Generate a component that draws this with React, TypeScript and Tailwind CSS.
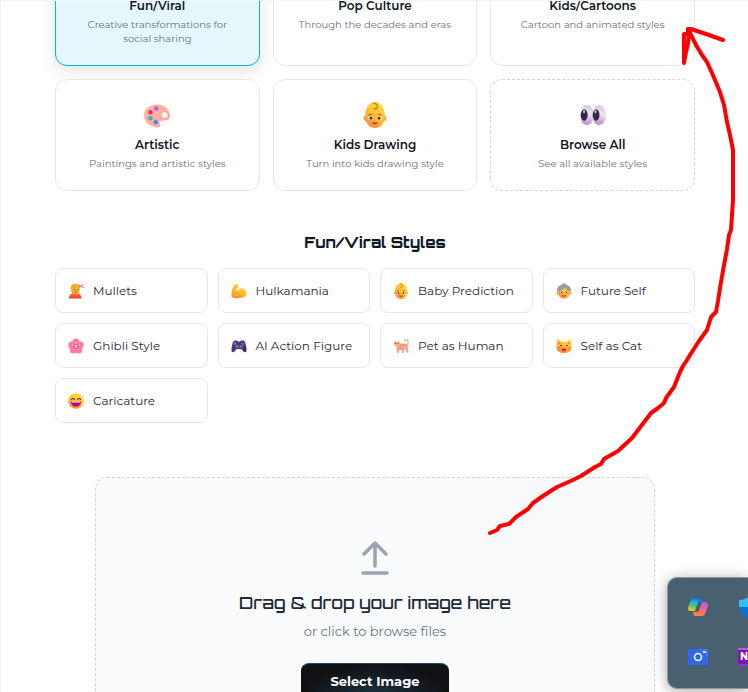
import type { ReactNode } from "react";

function Icon({ size, children }: { size: number; children: ReactNode }) {
  return (
    <svg width={size} height={size} viewBox="0 0 32 32" aria-hidden="true" className="shrink-0">
      {children}
    </svg>
  );
}

function Gradients() {
  return (
    <svg width="0" height="0" className="absolute" aria-hidden="true">
      <defs>
        <linearGradient id="gold" x1="0.8" y1="0" x2="0.3" y2="1">
          <stop offset="0" stopColor="#ffe04a" />
          <stop offset="0.55" stopColor="#fdbd2c" />
          <stop offset="1" stopColor="#f68b3c" />
        </linearGradient>
        <linearGradient id="peach" x1="0" y1="0" x2="1" y2="1">
          <stop offset="0" stopColor="#ffb79d" />
          <stop offset="1" stopColor="#ffa5a4" />
        </linearGradient>
        <linearGradient id="eye" x1="0.6" y1="0" x2="0.4" y2="1">
          <stop offset="0" stopColor="#d2c9d6" />
          <stop offset="0.4" stopColor="#ece8ee" />
          <stop offset="1" stopColor="#b58ace" />
        </linearGradient>
        <linearGradient id="pad" x1="0" y1="0" x2="1" y2="1">
          <stop offset="0" stopColor="#5b4488" />
          <stop offset="1" stopColor="#3b2270" />
        </linearGradient>
        <linearGradient id="shirt" x1="0" y1="0" x2="0" y2="1">
          <stop offset="0" stopColor="#ff7a35" />
          <stop offset="1" stopColor="#f43b28" />
        </linearGradient>
        <linearGradient id="copilotLeft" x1="0.6" y1="0" x2="0.3" y2="1">
          <stop offset="0" stopColor="#1565e0" />
          <stop offset="0.35" stopColor="#22b0e8" />
          <stop offset="0.65" stopColor="#58c66a" />
          <stop offset="1" stopColor="#f5c51b" />
        </linearGradient>
        <linearGradient id="copilotRight" x1="0.8" y1="0" x2="0.3" y2="1">
          <stop offset="0" stopColor="#b05cf0" />
          <stop offset="0.5" stopColor="#f4648e" />
          <stop offset="1" stopColor="#ff8a3c" />
        </linearGradient>
      </defs>
    </svg>
  );
}

function Palette({ size }: { size: number }) {
  return (
    <Icon size={size}>
      <path fill="url(#peach)" d="M16 3C7 3 0 8 0 17c0 8 8 14 17 14 5 0 3-3 2-6 0-2 2-2 5-2 5 0 8-2 8-6 0-8-7-14-16-14Z" />
      <circle cx="25.5" cy="16" r="3.4" fill="#fff" />
      <circle cx="15" cy="8" r="2.8" fill="#b85cf2" />
      <circle cx="8" cy="12.5" r="2.8" fill="#e82e83" />
      <circle cx="8" cy="20" r="2.8" fill="#3cb6ac" />
      <circle cx="14.5" cy="25" r="2.8" fill="#398cf0" />
    </Icon>
  );
}

function Baby({ size }: { size: number }) {
  return (
    <Icon size={size}>
      <ellipse cx="4.5" cy="20" rx="2.5" ry="3.4" fill="#f5a128" />
      <ellipse cx="27.5" cy="20" rx="2.5" ry="3.4" fill="#fcb42e" />
      <path fill="url(#gold)" d="M16 0C8 0 4 8 4 17c0 9 4 15 12 15s12-6 12-15C28 8 24 0 16 0Z" />
      <path d="M14 2c3-1 5 1 5 4 0 2-2 3-4 2" fill="none" stroke="#c9861a" strokeWidth="1.8" strokeLinecap="round" />
      <path d="M8 16l4-1m8 0 4 1" stroke="#b35c1c" strokeWidth="1.5" />
      <ellipse cx="10.5" cy="20" rx="2.8" ry="2.1" fill="#fff" />
      <ellipse cx="21.5" cy="20" rx="2.8" ry="2.1" fill="#fff" />
      <circle cx="11" cy="20" r="1.8" fill="#45302e" />
      <circle cx="21" cy="20" r="1.8" fill="#45302e" />
      <path d="M12 24.5c3 1 5 1 8 0-1 2-2 3-4 3s-3-1-4-3Z" fill="#b92c48" />
    </Icon>
  );
}

function Eyes({ size }: { size: number }) {
  return (
    <Icon size={size}>
      <ellipse cx="8.5" cy="16" rx="8.5" ry="12.5" fill="url(#eye)" />
      <ellipse cx="23.5" cy="16" rx="8.5" ry="12.5" fill="url(#eye)" />
      <ellipse cx="5.2" cy="16" rx="4.2" ry="7" fill="#37264a" />
      <ellipse cx="19.8" cy="16" rx="4.2" ry="7" fill="#37264a" />
      <ellipse cx="5" cy="12" rx="1.2" ry="1.8" fill="#d8d0df" />
      <ellipse cx="19" cy="12" rx="1.2" ry="1.8" fill="#d8d0df" />
    </Icon>
  );
}

function Haircut({ size }: { size: number }) {
  return (
    <Icon size={size}>
      <path d="M2 31c0-8 4-11 12-11s13 3 13 11Z" fill="url(#shirt)" />
      <path d="M6 13C5 5 9 2 15 2s10 4 9 11c0 6-3 10-8 10S6 20 6 13Z" fill="url(#gold)" />
      <path d="M6 13C4 5 9 1 15 2c5 0 8 2 8 6-6 0-9 1-11 4-1 4-4 4-6 1Z" fill="#f2ad20" />
      <circle cx="14" cy="13" r="1.3" fill="#4e5260" />
      <circle cx="20" cy="13" r="1.3" fill="#4e5260" />
      <path d="M14 18h5" stroke="#c34a35" strokeWidth="1.5" />
      <path d="M22 9l8-6m-8 2 9 4" stroke="#e0627d" strokeWidth="2" strokeLinecap="round" />
    </Icon>
  );
}

function Muscle({ size }: { size: number }) {
  return (
    <Icon size={size}>
      <path fill="url(#gold)" d="M6 4c3-3 8-2 9 1 1 3-1 5-4 5l1 7c3-6 9-8 14-5 6 4 6 11 2 15-5 4-21 5-27 1C0 20 2 10 6 4Z" />
      <path d="M12 18c2 4 2 5 6 6m-7-14-4 1" fill="none" stroke="#eaa02e" strokeWidth="1.5" strokeLinecap="round" />
    </Icon>
  );
}

function Elder({ size }: { size: number }) {
  return (
    <Icon size={size}>
      <circle cx="16" cy="5" r="4.5" fill="#9b9aa3" />
      <circle cx="4" cy="20" r="3" fill="#f5a128" />
      <circle cx="28" cy="20" r="3" fill="#f5a128" />
      <path d="M4 16C4 7 9 4 16 4s12 4 12 12c0 10-4 15-12 15S4 26 4 16Z" fill="url(#gold)" />
      <path d="M2 17C1 7 8 3 16 3s15 5 14 14c-6-1-10-4-12-8-3 4-8 7-16 8Z" fill="#9b9ca6" />
      <circle cx="10.5" cy="19" r="3" fill="#f3e4be" stroke="#ae7e43" />
      <circle cx="21.5" cy="19" r="3" fill="#f3e4be" stroke="#ae7e43" />
      <circle cx="11" cy="19" r="1.5" fill="#4a4045" />
      <circle cx="21" cy="19" r="1.5" fill="#4a4045" />
      <path d="M12 25q4 3 8 0" fill="none" stroke="#bd3b3b" strokeWidth="2" />
    </Icon>
  );
}

function Blossom({ size }: { size: number }) {
  return (
    <Icon size={size}>
      <g fill="#fb7ba4">
        <circle cx="16" cy="8" r="7" />
        <circle cx="24.5" cy="14" r="7" />
        <circle cx="21.5" cy="24" r="7" />
        <circle cx="10.5" cy="24" r="7" />
        <circle cx="7.5" cy="14" r="7" />
      </g>
      <circle cx="16" cy="17" r="6" fill="#ec477f" />
      <path d="M16 17V9m0 8 7-3m-7 3 5 7m-5-7-5 7m5-7-7-3" stroke="#ffd7e1" strokeWidth="1.6" strokeLinecap="round" />
    </Icon>
  );
}

function Gamepad({ size }: { size: number }) {
  return (
    <Icon size={size}>
      <path d="M7 5h5l2 2h4l2-2h5c3 0 5 8 6 17 1 8-4 8-7 4l-3-4H11l-3 4C5 30 0 30 1 22 2 13 4 5 7 5Z" fill="url(#pad)" />
      <circle cx="12" cy="17" r="3.2" fill="#7c69aa" />
      <circle cx="20" cy="17" r="3.2" fill="#7c69aa" />
      <circle cx="22" cy="11" r="1.4" fill="#45a3f5" />
      <circle cx="26" cy="11" r="1.4" fill="#ee4e65" />
      <circle cx="24" cy="14" r="1.4" fill="#52cd72" />
      <path d="M8 9v5m-2.5-2.5h5" stroke="#9b8bc4" strokeWidth="1.6" />
    </Icon>
  );
}

function Cat({ size }: { size: number }) {
  return (
    <Icon size={size}>
      <path d="M24 14c6 0 6-2 6-6 0-5-5-6-7-3" fill="none" stroke="#efb395" strokeWidth="2.8" strokeLinecap="round" />
      <path d="M2 5l4 3h3l4-3v6l12 0c4 0 6 4 5 8l1 10h-5l-1-6-3 1v6h-4l-1-6h-4l-1 6H8l-1-9-1-5c-3-1-5-3-4-6Z" fill="#f2ad8c" />
      <path d="m15 12 1 4m4-4v4m5-3-1 4M8 21h4" stroke="#d98466" strokeWidth="1.5" />
      <circle cx="5" cy="11" r="1" fill="#513b3b" />
      <circle cx="10" cy="11" r="1" fill="#513b3b" />
      <path d="M10 18h12l-2 6h-8Z" fill="#f694a0" />
    </Icon>
  );
}

function CatFace({ size }: { size: number }) {
  return (
    <Icon size={size}>
      <path d="M3 2c3 1 6 3 8 6h10c2-3 5-5 8-6 2 4 2 11 2 17 0 8-7 11-15 11S1 27 1 19C1 13 1 6 3 2Z" fill="url(#gold)" />
      <path d="m5 7 4 4-4 2Zm22 0-4 4 4 2Z" fill="#f57b5c" />
      <path d="M1 19h8m-7 5 7-1m22-4h-8m7 5-7-1" stroke="#ee6a4e" strokeWidth="1.5" />
      <path d="M8 16q2-3 4 0m8 0q2-3 4 0" fill="none" stroke="#57392e" strokeWidth="2" />
      <path d="M11 21h10q-1 6-5 6t-5-6Z" fill="#bc2b5b" />
      <path d="M14 19h4l-2 3Z" fill="#ff7a79" />
    </Icon>
  );
}

function Grin({ size }: { size: number }) {
  return (
    <Icon size={size}>
      <circle cx="16" cy="16" r="15.5" fill="url(#gold)" />
      <path d="M7 13q3-5 6 0m6 0q3-5 6 0" fill="none" stroke="#51332f" strokeWidth="2.2" strokeLinecap="round" />
      <path d="M6 17h20c0 6-4 10-10 10S6 23 6 17Z" fill="#b3087d" />
      <path d="M7 17h18l-1 2H8Z" fill="#fff" />
    </Icon>
  );
}

type Glyph = (props: { size: number }) => ReactNode;

const categories: { title: string; text: string; icon: Glyph; tone: string }[] = [
  {
    title: "Fun/Viral",
    text: "Creative transformations for social sharing",
    icon: Grin,
    tone: "border-[#06b6d4] bg-[#e6f7fb] shadow-[0_5px_16px_rgba(0,0,0,0.12)]",
  },
  { title: "Pop Culture", text: "Through the decades and eras", icon: Haircut, tone: "border-gray-200 bg-white" },
  { title: "Kids/Cartoons", text: "Cartoon and animated styles", icon: CatFace, tone: "border-gray-200 bg-white" },
  { title: "Artistic", text: "Paintings and artistic styles", icon: Palette, tone: "border-gray-200 bg-white" },
  { title: "Kids Drawing", text: "Turn into kids drawing style", icon: Baby, tone: "border-gray-200 bg-white" },
  { title: "Browse All", text: "See all available styles", icon: Eyes, tone: "border-dashed border-gray-300 bg-white" },
];

const styles: { label: string; icon: Glyph }[] = [
  { label: "Mullets", icon: Haircut },
  { label: "Hulkamania", icon: Muscle },
  { label: "Baby Prediction", icon: Baby },
  { label: "Future Self", icon: Elder },
  { label: "Ghibli Style", icon: Blossom },
  { label: "AI Action Figure", icon: Gamepad },
  { label: "Pet as Human", icon: Cat },
  { label: "Self as Cat", icon: CatFace },
  { label: "Caricature", icon: Grin },
];

function TrayPanel() {
  return (
    <aside className="absolute right-0 bottom-[3px] grid h-28 w-[81px] grid-rows-2 overflow-hidden rounded-l-[10px] border border-r-0 border-[#8d979d] bg-[#48606f] pt-1 pb-1.5 shadow-[0_2px_14px_rgba(0,0,0,0.35)]">
      <div className="flex items-center gap-[30px] pl-5">
        <svg width="20" height="18" viewBox="0 0 20 18" className="shrink-0" aria-hidden="true">
          <path d="M6 0h7c1.500 0 2 1 2.500 3h-3c-2 0-2.500 1-3.500 4l-2 6H3c-3 0-3.500-2-2.500-5l2-5C3.300 1 4 0 6 0Z" fill="url(#copilotLeft)" />
          <path d="M14 18H8c-2 0-2.500-1-3-4h3c2 0 3-1 4-4l2-6h3c3 0 3.500 2 2.500 5l-2 6c-.8 2-1.500 3-3.500 3Z" fill="url(#copilotRight)" />
        </svg>
        <svg width="24" height="24" viewBox="0 0 24 24" className="shrink-0" aria-hidden="true">
          <path d="M1 5c5 0 8-2 11-4 3 2 6 4 11 4v7H1Z" fill="#34bdf2" />
          <path d="M1 12h22c0 6-6 10-11 12C7 22 2 18 1 12Z" fill="#0874d1" />
        </svg>
      </div>
      <div className="flex items-center gap-[30px] pl-5">
        <svg width="20" height="16" viewBox="0 0 20 16" className="shrink-0" aria-hidden="true">
          <path d="M0 0h20v16H0Z" fill="#2e66ee" />
          <path d="M10 0h10v8Z" fill="#4279f5" />
          <circle cx="10" cy="8" r="3.5" fill="none" stroke="#fff" strokeWidth="1.5" />
          <path d="M15 3h3" stroke="#fff" strokeWidth="1.5" />
        </svg>
        <div className="flex h-[18px] w-6 shrink-0 items-center bg-linear-to-b from-[#c05ae2] to-[#8c31c7]">
          <span className="bg-[#7719aa] px-0.5 text-[10px] leading-[14px] font-bold text-white">N</span>
        </div>
      </div>
    </aside>
  );
}

function ArrowMark() {
  return (
    <svg width="268" height="520" viewBox="480 20 268 520" className="pointer-events-none absolute top-5 right-0" aria-hidden="true">
      <g fill="none" stroke="#ff0000" strokeWidth="4" strokeLinecap="round" strokeLinejoin="round">
        <path d="M490 533L497 530L500 526L509 524L516 517L528 509L533 503L543 496L557 487L564 484L575 479L581 476L595 467L601 464L604 459L618 451L632 438L648 417L651 413L658 408L664 403L666 398L674 387L680 372L683 366L687 360L690 355L699 341L707 330L711 317L716 312L718 301L720 288L724 265L725 260L727 249L729 235L731 230L732 215L733 200L733 150L730 135L727 122L724 105L720 92L715 80L712 73L707 62L702 55L696 45L690 33L688 29" />
        <path d="M723 40L709 35L703 33L691 29L688 29L688 34L684 34L684 63L686 52L688 44L689 31" />
      </g>
    </svg>
  );
}

export default function App() {
  return (
    <div className="relative h-screen overflow-hidden border-l border-[#f0f0f0] bg-white font-['Montserrat','Inter','Noto_Sans',sans-serif] text-gray-900">
      <Gradients />
      <div className="absolute inset-x-0 top-0 z-10 h-px bg-gray-100" />
      <main className="-mt-[60px] pr-[53px] pl-[54px]">
        <section className="grid grid-cols-3 gap-[13px]" aria-label="Style categories">
          {categories.map(({ title, text, icon: Glyph, tone }) => (
            <button key={title} type="button" className={`flex flex-col items-center rounded-xl border px-6 py-[19px] ${tone}`}>
              <span className="mb-1.5 flex h-8 items-center">
                <Glyph size={26} />
              </span>
              <span className="mb-1 text-xs leading-4 font-semibold">{title}</span>
              <span className="text-[10px] leading-[14px] text-gray-500">{text}</span>
            </button>
          ))}
        </section>

        <section className="mt-10">
          <h2 className="mb-[13px] text-center font-['Orbitron','DejaVu_Sans',sans-serif] text-[15px] leading-6 font-extrabold">Fun/Viral Styles</h2>
          <div className="grid grid-cols-4 gap-2.5">
            {styles.map(({ label, icon: Glyph }) => (
              <button key={label} type="button" className="flex items-center gap-[9px] rounded-lg border border-gray-200 bg-white px-3 py-3 text-xs leading-[19px] text-gray-800">
                <Glyph size={16} />
                <span>{label}</span>
              </button>
            ))}
          </div>
        </section>

        <section className="mx-10 mt-[54px] flex flex-col items-center rounded-xl border border-dashed border-gray-300 bg-gray-50 py-[60px]">
          <svg width="40" height="40" viewBox="0 0 40 40" fill="none" stroke="#9ca3af" strokeWidth="3.5" strokeLinecap="round" strokeLinejoin="round" aria-hidden="true">
            <path d="M20 28V5M9 16 20 5l11 11M8 35h24" />
          </svg>
          <h3 className="mt-3 font-['Orbitron','DejaVu_Sans',sans-serif] text-[17px] leading-[26px] font-medium text-gray-800">Drag &amp; drop your image here</h3>
          <p className="mt-[5px] text-[13px] leading-5 text-gray-500">or click to browse files</p>
          <button type="button" className="mt-[22px] rounded-lg border border-transparent border-t-[#24466b] bg-[#111114] bg-radial-[at_50%_100%] from-[#1d3440] to-[#111114] to-70% px-7 py-2 text-[13px] leading-[18px] font-bold text-white">
            Select Image
          </button>
        </section>
      </main>
      <TrayPanel />
      <ArrowMark />
    </div>
  );
}
